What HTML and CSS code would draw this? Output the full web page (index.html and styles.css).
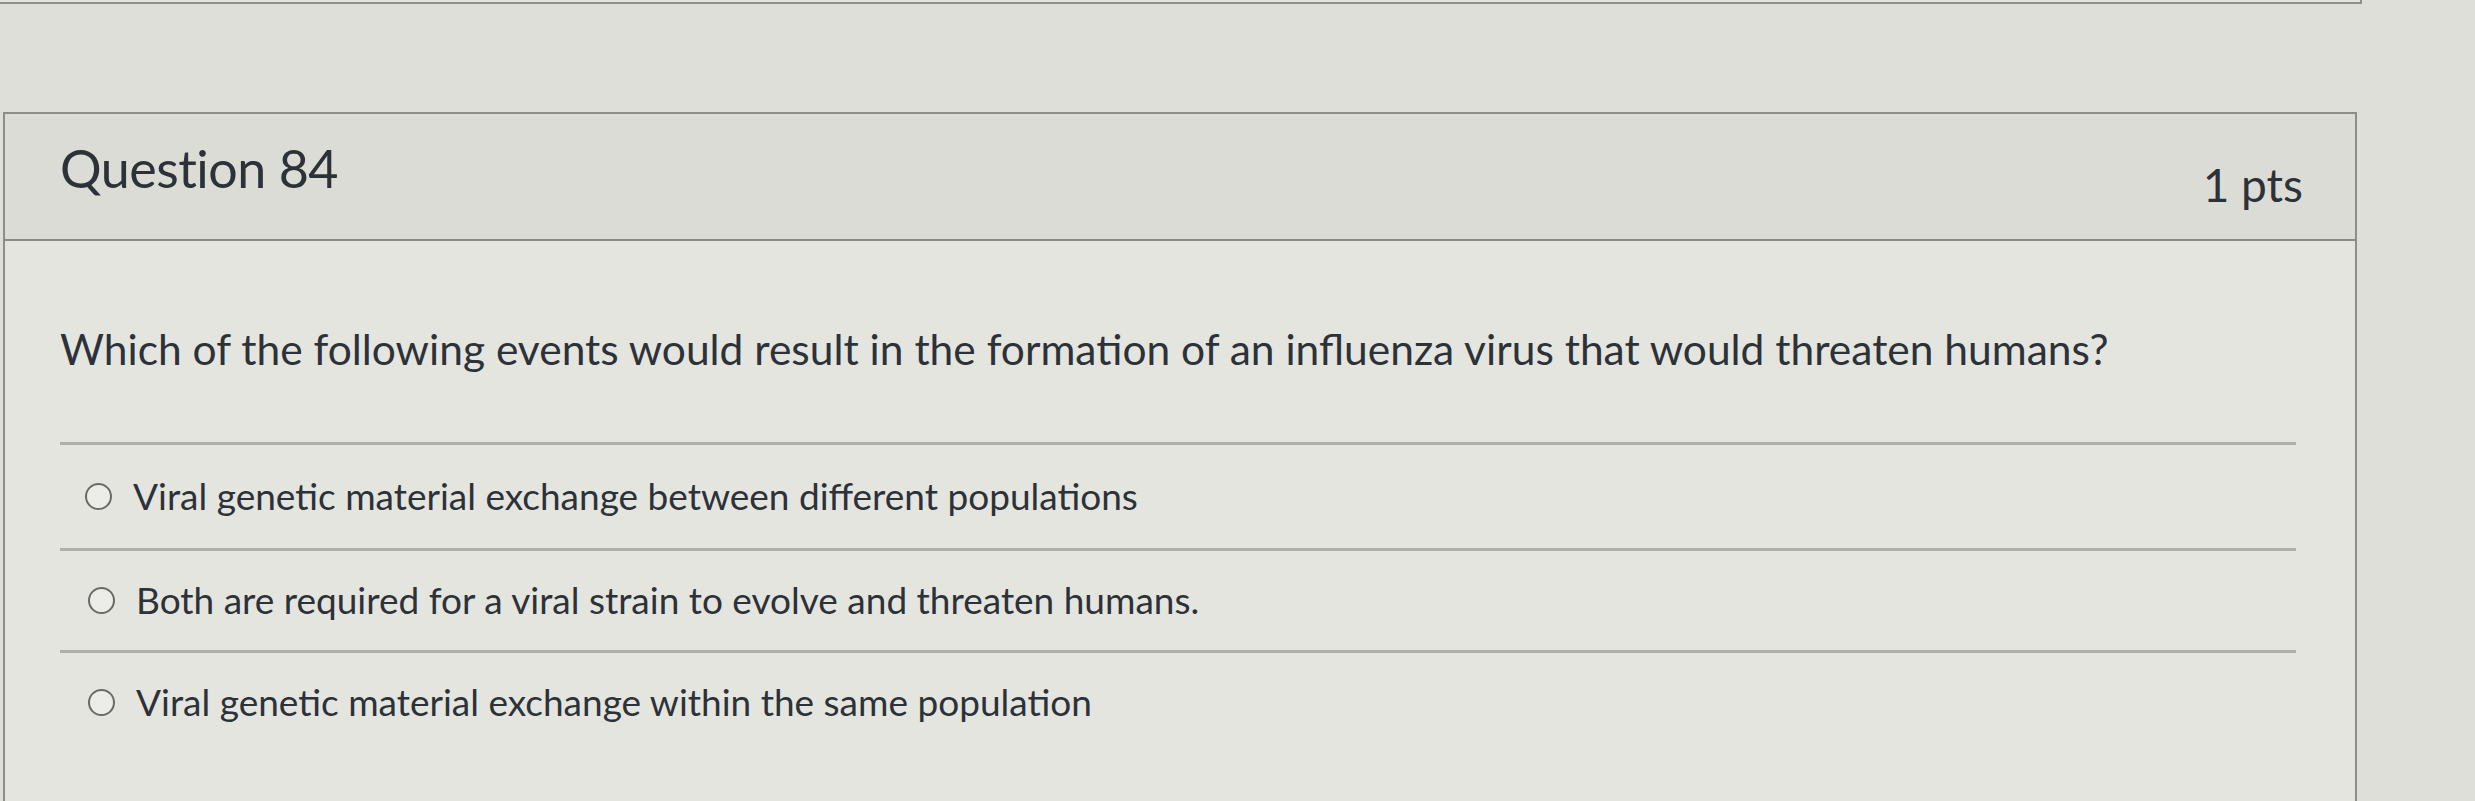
FILE: index.html
```html
<!DOCTYPE html>
<html>
<head>
<meta charset="utf-8">
<link rel="stylesheet" href="styles.css">
</head>
<body>
<div class="prev-card"></div>
<div class="card">
  <div class="card-header">
    <h2 class="q-title">Question 84</h2>
    <div class="q-points">1 pts</div>
  </div>
  <div class="card-body">
    <p class="q-text">Which of the following events would result in the formation of an influenza virus that would threaten humans?</p>
    <div class="answers">
      <label class="answer"><span class="radio"></span><span class="answer-text">Viral genetic material exchange between different populations</span></label>
      <label class="answer shift"><span class="radio"></span><span class="answer-text">Both are required for a viral strain to evolve and threaten humans.</span></label>
      <label class="answer shift last"><span class="radio"></span><span class="answer-text">Viral genetic material exchange within the same population</span></label>
    </div>
  </div>
</div>
</body>
</html>
```

FILE: styles.css
```css
html, body {
  margin: 0;
  padding: 0;
}
body {
  background: #dfdfda;
  font-family: Lato, "Open Sans", sans-serif;
  color: #2c3238;
  width: 2475px;
  height: 801px;
  overflow: hidden;
}
.prev-card {
  width: 2360px;
  height: 2px;
  border-bottom: 2px solid #8e8e8b;
  border-right: 2px solid #8e8e8b;
  background: #e3e3de;
}
.card {
  margin-top: 108px;
  margin-left: 3px;
  width: 2350px;
  border: 2px solid #8d8d8a;
  background: #e5e5e0;
}
.card-header {
  display: flex;
  justify-content: space-between;
  align-items: flex-start;
  height: 125px;
  padding: 0 52px 0 55px;
  background: #dcdcd7;
  border-bottom: 2px solid #8a8a87;
}
.q-title {
  margin: 23px 0 0 0;
  font-size: 52px;
  font-weight: 400;
  line-height: 62px;
  letter-spacing: -0.5px;
}
.q-points {
  margin-top: 43px;
  font-size: 46px;
  line-height: 56px;
}
.card-body {
  padding: 83px 59px 200px 55px;
}
.q-text {
  margin: 0;
  font-size: 42.5px;
  line-height: 50px;
  padding-bottom: 68px;
  border-bottom: 3px solid #aeaeab;
}
.answers {
  display: flex;
  flex-direction: column;
}
.answer {
  display: flex;
  align-items: center;
  gap: 21px;
  padding: 30px 0 31px 25px;
  border-bottom: 3px solid #aeaeab;
  font-size: 37px;
  line-height: 42px;
}
.answer.shift {
  padding-left: 28px;
  padding-top: 28px;
  padding-bottom: 29px;
}
.answer.last {
  border-bottom: none;
}
.radio {
  flex: none;
  width: 23px;
  height: 23px;
  border: 2.5px solid #6a6a68;
  border-radius: 50%;
  background: #ecece8;
}
.answer-text {
  white-space: nowrap;
}
```
